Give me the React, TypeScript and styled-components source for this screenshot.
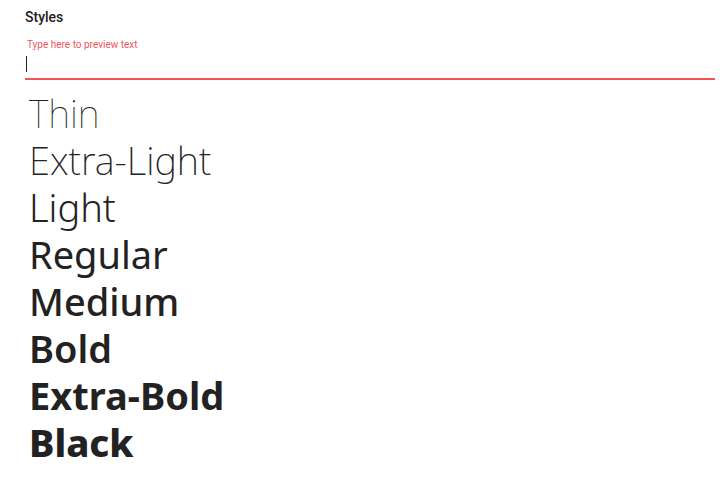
import React from "react";
import styled, { createGlobalStyle } from "styled-components";

const Global = createGlobalStyle`
  html, body { margin: 0; padding: 0; background: #ffffff; }
  body { font-family: Roboto, "Noto Sans", sans-serif; }
`;

const Page = styled.div`
  padding: 8px 12px 0 25px;
  width: 727px;
  box-sizing: border-box;
`;

const Heading = styled.h2`
  margin: 0;
  font-family: Roboto, sans-serif;
  font-size: 14px;
  font-weight: 500;
  line-height: 18px;
  color: #212121;
`;

const Field = styled.label`
  display: flex;
  flex-direction: column;
  margin-top: 13px;
  border-bottom: 2px solid #f0555a;
  padding-bottom: 6px;
`;

const FieldLabel = styled.span`
  font-family: Roboto, sans-serif;
  font-size: 10px;
  line-height: 12px;
  color: #f0555a;
  padding-left: 2px;
`;

const Input = styled.input`
  border: none;
  outline: none;
  padding: 0;
  margin-top: 5px;
  height: 16px;
  font-family: Roboto, sans-serif;
  font-size: 14px;
  caret-color: #212121;
  background: transparent;
`;

const Caret = styled.span`
  display: block;
  width: 1px;
  height: 16px;
  background: #212121;
  margin-top: -16px;
  margin-left: 1px;
`;

const List = styled.ul`
  list-style: none;
  margin: 10px 0 0 0;
  padding: 0 0 0 4px;
`;

const Sample = styled.li<{ $w: number }>`
  font-family: "Noto Sans", sans-serif;
  font-size: 38px;
  line-height: 47px;
  font-weight: ${(p) => p.$w};
  color: #222222;
  white-space: nowrap;
`;

const styles: [string, number][] = [
  ["Thin", 100],
  ["Extra-Light", 200],
  ["Light", 300],
  ["Regular", 400],
  ["Medium", 500],
  ["Bold", 600],
  ["Extra-Bold", 700],
  ["Black", 800],
];

export default function App() {
  return (
    <>
      <Global />
      <Page>
        <Heading>Styles</Heading>
        <Field>
          <FieldLabel>Type here to preview text</FieldLabel>
          <Input aria-label="preview text" />
          <Caret />
        </Field>
        <List>
          {styles.map(([name, w]) => (
            <Sample key={name} $w={w}>
              {name}
            </Sample>
          ))}
        </List>
      </Page>
    </>
  );
}
